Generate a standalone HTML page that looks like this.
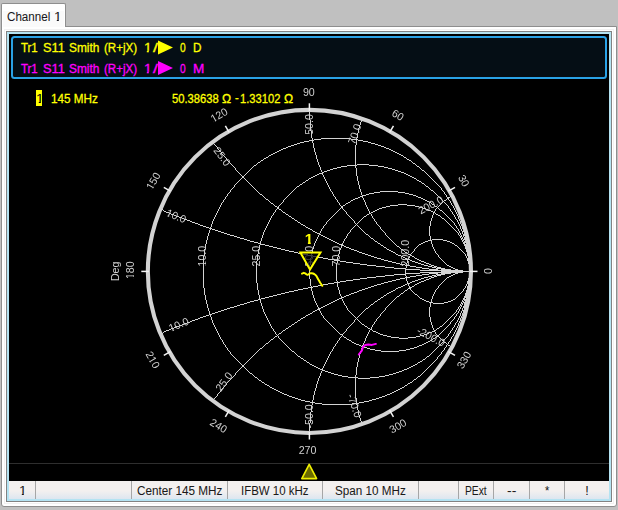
<!DOCTYPE html>
<html><head><meta charset="utf-8"><title>Channel 1</title>
<style>
html,body{margin:0;padding:0;background:#c0c0c0;}
body{width:618px;height:510px;background:#c0c0c0;position:relative;overflow:hidden;font-family:"Liberation Sans",sans-serif;}
div,span{position:absolute;box-sizing:border-box;}
.t{white-space:nowrap;line-height:1;transform-origin:0 0;}
#outer{left:1px;top:26px;width:616px;height:481px;background:#fff;border:1px solid #8e8e8e;border-radius:0 0 3px 3px;}
#tab{left:1px;top:3px;width:65px;height:24px;background:#fff;border:1px solid #8e8e8e;border-bottom:none;border-radius:2px 2px 0 0;}
#inner{left:6px;top:31px;width:606px;height:471px;background:#b4e3f2;border:1px solid #828282;}
#black{left:9px;top:34px;width:600px;height:447px;background:#000;}
#hdr{left:11px;top:36px;width:596px;height:43px;border:2px solid #2aa2e6;border-radius:3.5px;background:#050e15;}
#status{left:9px;top:481px;width:600px;height:18px;background:linear-gradient(#f3f0ef 0,#f3f0ef 55%,#dde6f0 100%);}
.sep{top:481px;width:1px;height:18px;background:#a6a6a6;}
.st{font-size:11.8px;color:#1a1a1a;top:485px;}
#hline{left:9px;top:463px;width:600px;height:1px;background:#2e2e2e;}
.y{color:#f2f200;} .m{color:#f000f0;}
.h{font-size:11.8px;}
svg{position:absolute;left:0;top:0;will-change:transform;}
svg text{font-family:"Liberation Sans",sans-serif;font-size:10.67px;fill:#d0d0d0;}
</style></head><body>
<div id="outer"></div>
<div id="tab"></div>
<div style="left:3px;top:11px;width:61px;height:16px;background:#fafafa;"></div>
<div style="left:4px;top:29px;width:610px;height:475px;border:1px solid #f1f1f1;"></div>
<div id="inner"></div>
<div id="black"></div>
<div id="hdr"></div>
<div style="left:36px;top:90px;width:6px;height:16px;background:#ffff00;"></div>
<div id="hline"></div>
<div id="status"></div><div class="sep" style="left:35px"></div><div class="sep" style="left:131px"></div><div class="sep" style="left:227px"></div><div class="sep" style="left:322px"></div><div class="sep" style="left:418px"></div><div class="sep" style="left:458px"></div><div class="sep" style="left:493px"></div><div class="sep" style="left:529px"></div><div class="sep" style="left:564px"></div>
<span class="t" style="left:7.00px;top:11.00px;font-size:12.5px;color:#181820;-webkit-text-stroke:0.05px #181820;transform:scaleX(0.9304);">Channel</span>
<span class="t" style="clip-path:polygon(0 0,8px 0,8px 8.8px,4.4px 8.8px,4.4px 13px,2.55px 13px,2.55px 8.8px,0 8.8px);left:54.00px;top:11.00px;font-size:12.5px;color:#181820;-webkit-text-stroke:0.05px #181820;transform:scaleX(1.1000);">1</span>
<span class="t" style="left:21.30px;top:42.00px;font-size:12.5px;color:#ffff00;-webkit-text-stroke:0.3px #ffff00;transform:scaleX(0.9119);">Tr1</span>
<span class="t" style="left:42.88px;top:42.00px;font-size:12.5px;color:#ffff00;-webkit-text-stroke:0.3px #ffff00;transform:scaleX(1.0223);">S11</span>
<span class="t" style="left:69.35px;top:42.00px;font-size:12.5px;color:#ffff00;-webkit-text-stroke:0.3px #ffff00;transform:scaleX(0.9516);">Smith</span>
<span class="t" style="left:104.07px;top:42.00px;font-size:12.5px;color:#ffff00;-webkit-text-stroke:0.3px #ffff00;transform:scaleX(0.9265);">(R+jX)</span>
<span class="t" style="clip-path:polygon(0 0,8px 0,8px 8.8px,4.4px 8.8px,4.4px 13px,2.55px 13px,2.55px 8.8px,0 8.8px);left:143.90px;top:42.00px;font-size:12.5px;color:#ffff00;-webkit-text-stroke:0.3px #ffff00;transform:scaleX(1.1000);">1</span>
<span class="t" style="left:152.90px;top:42.00px;font-size:12.5px;color:#ffff00;-webkit-text-stroke:0.3px #ffff00;transform:scaleX(1.4000);">/</span>
<span class="t" style="left:180.10px;top:42.00px;font-size:12.5px;color:#ffff00;-webkit-text-stroke:0.3px #ffff00;transform:scaleX(0.8143);">0</span>
<span class="t" style="left:193.36px;top:42.00px;font-size:12.5px;color:#ffff00;-webkit-text-stroke:0.3px #ffff00;transform:scaleX(0.9375);">D</span>
<span class="t" style="left:21.30px;top:63.00px;font-size:12.5px;color:#ff00ff;-webkit-text-stroke:0.3px #ff00ff;transform:scaleX(0.9119);">Tr1</span>
<span class="t" style="left:42.88px;top:63.00px;font-size:12.5px;color:#ff00ff;-webkit-text-stroke:0.3px #ff00ff;transform:scaleX(1.0223);">S11</span>
<span class="t" style="left:69.35px;top:63.00px;font-size:12.5px;color:#ff00ff;-webkit-text-stroke:0.3px #ff00ff;transform:scaleX(0.9516);">Smith</span>
<span class="t" style="left:104.07px;top:63.00px;font-size:12.5px;color:#ff00ff;-webkit-text-stroke:0.3px #ff00ff;transform:scaleX(0.9265);">(R+jX)</span>
<span class="t" style="clip-path:polygon(0 0,8px 0,8px 8.8px,4.4px 8.8px,4.4px 13px,2.55px 13px,2.55px 8.8px,0 8.8px);left:143.90px;top:63.00px;font-size:12.5px;color:#ff00ff;-webkit-text-stroke:0.3px #ff00ff;transform:scaleX(1.1000);">1</span>
<span class="t" style="left:152.90px;top:63.00px;font-size:12.5px;color:#ff00ff;-webkit-text-stroke:0.3px #ff00ff;transform:scaleX(1.4000);">/</span>
<span class="t" style="left:180.10px;top:63.00px;font-size:12.5px;color:#ff00ff;-webkit-text-stroke:0.3px #ff00ff;transform:scaleX(0.8143);">0</span>
<span class="t" style="left:193.21px;top:63.00px;font-size:12.5px;color:#ff00ff;-webkit-text-stroke:0.3px #ff00ff;transform:scaleX(1.0889);">M</span>
<span class="t" style="clip-path:polygon(0 0,8px 0,8px 8.8px,4.4px 8.8px,4.4px 13px,2.55px 13px,2.55px 8.8px,0 8.8px);left:35.95px;top:93.00px;font-size:12.5px;color:#000;-webkit-text-stroke:0.05px #000;transform:scaleX(1.1000);">1</span>
<span class="t" style="left:51.36px;top:93.00px;font-size:12.5px;color:#ffff00;-webkit-text-stroke:0.3px #ffff00;transform:scaleX(0.9388);">145 MHz</span>
<span class="t" style="left:171.80px;top:93.00px;font-size:12.5px;color:#ffff00;-webkit-text-stroke:0.3px #ffff00;transform:scaleX(0.8962);">50.38638</span>
<span class="t" style="left:221.80px;top:93.00px;font-size:12.5px;color:#ffff00;-webkit-text-stroke:0.3px #ffff00;transform:scaleX(0.9778);">Ω</span>
<span class="t" style="left:235.00px;top:92.20px;font-size:12.5px;color:#ffff00;-webkit-text-stroke:0.3px #ffff00;transform:scaleX(0.9000);">-</span>
<span class="t" style="left:239.71px;top:93.00px;font-size:12.5px;color:#ffff00;-webkit-text-stroke:0.3px #ffff00;transform:scaleX(0.8932);">1.33102</span>
<span class="t" style="left:283.70px;top:93.00px;font-size:12.5px;color:#ffff00;-webkit-text-stroke:0.3px #ffff00;transform:scaleX(0.9778);">Ω</span>
<span class="t" style="clip-path:polygon(0 0,8px 0,8px 8.8px,4.4px 8.8px,4.4px 13px,2.55px 13px,2.55px 8.8px,0 8.8px);left:18.90px;top:485.00px;font-size:12.5px;color:#1a1a1a;-webkit-text-stroke:0.05px #1a1a1a;transform:scaleX(1.1000);">1</span>
<span class="t" style="left:136.60px;top:485.00px;font-size:12.5px;color:#1a1a1a;-webkit-text-stroke:0.05px #1a1a1a;transform:scaleX(0.9385);">Center 145 MHz</span>
<span class="t" style="left:241.38px;top:485.00px;font-size:12.5px;color:#1a1a1a;-webkit-text-stroke:0.05px #1a1a1a;transform:scaleX(0.9167);">IFBW 10 kHz</span>
<span class="t" style="left:334.77px;top:485.00px;font-size:12.5px;color:#1a1a1a;-webkit-text-stroke:0.05px #1a1a1a;transform:scaleX(0.9347);">Span 10 MHz</span>
<span class="t" style="left:465.18px;top:485.00px;font-size:12.5px;color:#1a1a1a;-webkit-text-stroke:0.05px #1a1a1a;transform:scaleX(0.8231);">PExt</span>
<span class="t" style="left:507.30px;top:485.00px;font-size:12.5px;color:#1a1a1a;-webkit-text-stroke:0.05px #1a1a1a;transform:scaleX(1.1125);">--</span>
<span class="t" style="left:544.70px;top:485.00px;font-size:12.5px;color:#1a1a1a;-webkit-text-stroke:0.05px #1a1a1a;transform:scaleX(0.8800);">*</span>
<span class="t" style="left:585.20px;top:485.00px;font-size:12.5px;color:#1a1a1a;-webkit-text-stroke:0.05px #1a1a1a;transform:scaleX(1.0000);">!</span>
<svg width="618" height="510" viewBox="0 0 618 510">
<polygon points="158,40.5 158,54.5 173,47.5" fill="#ffff00"/>
<polygon points="158,61 158,75 173,68" fill="#ff00ff"/>
<g fill="none" stroke="#d3d3d3" stroke-width="1" shape-rendering="crispEdges">
<path transform="translate(0 .5)" d="M309 111h1M309 112h1M309 113h1M309 114h1M309 115h1M309 116h1M309 117h1M309 118h1M309 119h1M310 120h1M361 120h1M310 121h1M361 121h1M310 122h1M360 122h1M310 123h1M360 123h1M310 124h1M360 124h1M310 125h1M359 125h1M310 126h1M359 126h1M310 127h1M359 127h1M310 128h1M358 128h1M310 129h1M358 129h1M310 130h1M358 130h1M311 131h1M358 131h1M311 132h1M358 132h1M311 133h1M357 133h1M311 134h1M357 134h1M311 135h1M357 135h1M311 136h1M357 136h1M311 137h1M357 137h1M312 138h1M321 138h30M356 138h1M312 139h1M314 139h7M351 139h7M309 140h5M356 140h1M358 140h5M304 141h5M312 141h1M356 141h1M363 141h5M300 142h4M312 142h1M356 142h1M368 142h3M213 143h1M297 143h3M313 143h1M356 143h1M371 143h4M214 144h1M294 144h3M313 144h1M356 144h1M375 144h3M215 145h1M291 145h3M313 145h1M355 145h1M378 145h3M216 146h1M288 146h3M313 146h1M355 146h1M381 146h3M217 147h1M286 147h2M313 147h1M355 147h1M384 147h2M217 148h1M283 148h3M314 148h1M355 148h1M386 148h3M218 149h1M281 149h2M314 149h1M355 149h1M389 149h2M219 150h1M279 150h2M314 150h1M355 150h1M391 150h2M220 151h1M277 151h2M314 151h1M355 151h1M393 151h2M221 152h1M275 152h2M315 152h1M355 152h1M395 152h2M221 153h1M273 153h2M315 153h1M355 153h1M397 153h2M222 154h1M271 154h2M315 154h1M355 154h1M399 154h2M223 155h1M269 155h2M316 155h1M355 155h1M401 155h2M224 156h1M268 156h1M316 156h1M355 156h1M403 156h1M225 157h1M266 157h2M316 157h1M355 157h1M404 157h2M226 158h1M264 158h2M316 158h1M355 158h1M406 158h1M226 159h1M263 159h1M317 159h1M355 159h1M407 159h2M227 160h1M261 160h2M317 160h1M355 160h1M409 160h2M228 161h1M260 161h1M317 161h1M355 161h1M411 161h1M229 162h1M258 162h2M318 162h1M355 162h1M412 162h1M230 163h1M257 163h1M318 163h1M355 163h1M413 163h2M231 164h1M256 164h1M318 164h1M355 164h1M357 164h12M415 164h1M232 165h1M254 165h2M319 165h1M347 165h10M369 165h9M416 165h1M233 166h1M253 166h1M319 166h1M341 166h6M355 166h1M378 166h6M417 166h2M234 167h1M252 167h1M320 167h1M337 167h4M355 167h1M384 167h4M419 167h1M235 168h1M251 168h1M320 168h1M333 168h4M356 168h1M388 168h4M420 168h1M235 169h1M250 169h1M320 169h1M330 169h3M356 169h1M392 169h3M421 169h1M236 170h1M249 170h1M321 170h1M327 170h3M356 170h1M395 170h3M422 170h2M237 171h1M248 171h1M321 171h1M324 171h3M356 171h1M398 171h3M424 171h1M238 172h1M247 172h1M322 172h2M356 172h1M401 172h3M425 172h1M239 173h1M246 173h1M319 173h4M356 173h1M404 173h2M426 173h1M240 174h1M245 174h1M317 174h2M322 174h1M356 174h1M406 174h2M427 174h1M241 175h1M244 175h1M315 175h2M323 175h1M356 175h1M408 175h2M428 175h1M242 176h2M313 176h2M323 176h1M357 176h1M410 176h2M429 176h1M242 177h2M311 177h2M324 177h1M357 177h1M412 177h2M430 177h1M241 178h1M244 178h1M309 178h2M324 178h1M357 178h1M414 178h2M431 178h1M240 179h1M245 179h1M308 179h1M325 179h1M357 179h1M416 179h1M432 179h1M239 180h1M246 180h1M306 180h2M325 180h1M357 180h1M417 180h2M433 180h1M238 181h1M247 181h1M305 181h1M326 181h1M358 181h1M419 181h2M434 181h1M237 182h1M248 182h1M303 182h2M326 182h1M358 182h1M421 182h1M435 182h1M236 183h1M249 183h1M302 183h1M327 183h1M358 183h1M422 183h2M436 183h1M235 184h1M250 184h1M300 184h2M327 184h1M358 184h1M424 184h1M437 184h1M234 185h1M251 185h1M299 185h1M328 185h1M359 185h1M425 185h1M438 185h1M234 186h1M252 186h1M297 186h2M328 186h1M359 186h1M426 186h2M439 186h1M233 187h1M253 187h1M296 187h1M329 187h1M359 187h1M428 187h1M440 187h1M232 188h1M254 188h1M295 188h1M329 188h1M359 188h1M429 188h1M441 188h1M231 189h1M255 189h1M294 189h1M330 189h1M360 189h1M430 189h1M441 189h1M230 190h1M256 190h1M293 190h1M330 190h1M360 190h1M431 190h2M442 190h1M230 191h1M257 191h1M292 191h1M331 191h1M360 191h1M380 191h18M433 191h1M443 191h1M229 192h1M258 192h1M291 192h1M332 192h1M361 192h1M374 192h6M398 192h7M434 192h1M444 192h1M228 193h1M259 193h1M290 193h1M332 193h1M361 193h1M369 193h5M405 193h4M435 193h1M444 193h1M227 194h1M260 194h2M289 194h1M333 194h1M361 194h1M366 194h3M409 194h4M436 194h1M445 194h1M227 195h1M262 195h1M288 195h1M333 195h1M362 195h4M413 195h3M437 195h1M446 195h1M226 196h1M263 196h1M287 196h1M334 196h1M360 196h3M416 196h2M438 196h1M446 196h1M450 196h1M225 197h1M264 197h1M286 197h1M335 197h1M358 197h2M362 197h1M418 197h3M439 197h1M447 197h3M225 198h1M265 198h1M285 198h1M335 198h1M355 198h3M363 198h1M421 198h2M440 198h1M447 198h2M224 199h1M266 199h2M284 199h1M336 199h1M353 199h2M363 199h1M423 199h2M441 199h1M446 199h1M448 199h1M223 200h1M268 200h1M283 200h1M337 200h1M351 200h2M364 200h1M425 200h2M442 200h1M444 200h2M449 200h1M223 201h1M269 201h1M283 201h1M337 201h1M350 201h1M364 201h1M427 201h2M443 201h1M450 201h1M222 202h1M270 202h1M282 202h1M338 202h1M348 202h2M365 202h1M429 202h2M442 202h1M444 202h1M450 202h1M221 203h1M271 203h2M281 203h1M339 203h1M346 203h2M365 203h1M431 203h1M441 203h1M445 203h1M451 203h1M221 204h1M273 204h1M280 204h1M339 204h1M345 204h1M365 204h1M398 204h9M432 204h2M440 204h1M446 204h1M451 204h1M220 205h1M274 205h1M279 205h1M340 205h1M343 205h2M366 205h1M390 205h8M407 205h8M434 205h1M439 205h1M447 205h1M452 205h1M220 206h1M275 206h2M278 206h1M341 206h2M366 206h1M386 206h4M415 206h4M435 206h2M438 206h1M448 206h1M453 206h1M219 207h1M277 207h2M341 207h2M367 207h1M382 207h4M419 207h4M437 207h1M448 207h1M453 207h1M219 208h1M277 208h2M340 208h1M342 208h1M367 208h1M379 208h3M423 208h3M436 208h1M438 208h1M449 208h1M454 208h1M162 209h1M218 209h1M276 209h1M279 209h2M339 209h1M343 209h1M368 209h1M377 209h2M426 209h2M435 209h1M439 209h1M450 209h1M454 209h1M163 210h1M218 210h1M275 210h1M281 210h1M338 210h1M344 210h1M368 210h1M375 210h2M428 210h3M435 210h1M440 210h2M450 210h1M455 210h1M164 211h2M217 211h1M275 211h1M282 211h1M337 211h1M345 211h1M369 211h1M373 211h2M431 211h2M434 211h1M442 211h1M451 211h1M455 211h1M166 212h3M217 212h1M274 212h1M283 212h2M336 212h1M346 212h1M369 212h1M371 212h2M433 212h2M443 212h1M452 212h1M456 212h1M169 213h2M216 213h1M273 213h1M285 213h1M335 213h1M346 213h1M369 213h2M433 213h1M435 213h1M444 213h1M452 213h1M456 213h1M171 214h3M216 214h1M273 214h1M286 214h2M334 214h1M347 214h1M367 214h2M371 214h1M433 214h1M436 214h2M445 214h1M453 214h1M457 214h1M174 215h2M215 215h1M272 215h1M288 215h1M333 215h1M348 215h1M366 215h1M371 215h1M432 215h1M438 215h2M446 215h1M454 215h1M457 215h1M176 216h3M215 216h1M271 216h1M289 216h2M332 216h1M349 216h1M364 216h2M372 216h1M432 216h1M440 216h1M447 216h1M454 216h1M458 216h1M179 217h3M214 217h1M271 217h1M291 217h1M331 217h1M350 217h1M363 217h1M372 217h1M432 217h1M441 217h1M448 217h1M455 217h1M458 217h1M182 218h2M214 218h1M270 218h1M292 218h2M330 218h1M351 218h1M362 218h1M373 218h1M431 218h1M442 218h2M449 218h1M455 218h1M458 218h1M184 219h3M213 219h1M270 219h1M294 219h1M329 219h1M352 219h1M361 219h1M374 219h1M431 219h1M444 219h1M450 219h1M456 219h1M459 219h1M187 220h3M213 220h1M269 220h1M295 220h2M328 220h1M353 220h1M360 220h1M374 220h1M431 220h1M445 220h1M451 220h1M457 220h1M459 220h1M190 221h2M212 221h1M269 221h1M297 221h1M327 221h1M354 221h1M359 221h1M375 221h1M430 221h1M446 221h1M452 221h1M457 221h1M460 221h1M192 222h3M212 222h1M268 222h1M298 222h2M326 222h1M354 222h1M358 222h1M376 222h1M430 222h1M447 222h1M453 222h1M458 222h1M460 222h1M195 223h3M212 223h1M268 223h1M300 223h1M326 223h1M355 223h1M357 223h1M376 223h1M430 223h1M448 223h1M454 223h1M458 223h1M460 223h1M198 224h2M211 224h1M267 224h1M301 224h2M325 224h1M356 224h1M377 224h1M430 224h1M449 224h1M454 224h1M459 224h1M461 224h1M200 225h3M211 225h1M267 225h1M303 225h2M324 225h1M355 225h1M357 225h1M378 225h1M430 225h1M450 225h1M455 225h1M459 225h1M461 225h1M203 226h3M211 226h1M266 226h1M305 226h1M323 226h1M354 226h1M358 226h1M379 226h1M429 226h1M451 226h1M456 226h1M460 226h1M462 226h1M206 227h3M210 227h1M266 227h1M306 227h2M323 227h1M353 227h1M359 227h1M380 227h1M429 227h1M452 227h1M456 227h1M460 227h1M462 227h1M209 228h3M265 228h1M308 228h2M322 228h1M352 228h1M360 228h1M380 228h1M429 228h1M453 228h1M457 228h1M460 228h1M462 228h1M210 229h1M212 229h3M265 229h1M310 229h2M321 229h1M351 229h1M361 229h1M381 229h1M429 229h1M454 229h1M458 229h1M461 229h1M463 229h1M209 230h1M215 230h3M264 230h1M312 230h1M321 230h1M350 230h1M362 230h1M382 230h1M429 230h1M455 230h1M458 230h1M461 230h1M463 230h1M209 231h1M218 231h3M264 231h1M313 231h2M320 231h1M350 231h1M363 231h1M383 231h1M429 231h1M456 231h1M459 231h1M462 231h2M209 232h1M221 232h3M263 232h1M315 232h2M320 232h1M349 232h1M364 232h1M384 232h1M429 232h1M457 232h1M459 232h1M462 232h1M464 232h1M208 233h1M224 233h3M263 233h1M317 233h3M348 233h1M365 233h1M385 233h1M429 233h1M458 233h1M460 233h1M462 233h1M464 233h1M208 234h1M227 234h3M263 234h1M319 234h2M347 234h1M366 234h2M385 234h1M429 234h1M458 234h1M460 234h1M463 234h2M208 235h1M230 235h4M262 235h1M318 235h1M321 235h2M347 235h1M368 235h1M386 235h1M429 235h1M459 235h1M461 235h1M463 235h2M207 236h1M234 236h3M262 236h1M318 236h1M323 236h2M346 236h1M369 236h1M387 236h1M430 236h1M460 236h2M463 236h1M465 236h1M207 237h1M237 237h3M262 237h1M317 237h1M325 237h2M346 237h1M370 237h1M388 237h1M430 237h1M460 237h1M462 237h1M464 237h2M207 238h1M240 238h4M261 238h1M317 238h1M327 238h2M345 238h1M371 238h2M389 238h1M430 238h1M461 238h2M464 238h2M207 239h1M244 239h3M261 239h1M316 239h1M329 239h2M344 239h1M373 239h1M390 239h1M430 239h1M432 239h11M461 239h1M463 239h3M206 240h1M247 240h3M261 240h1M316 240h1M331 240h2M344 240h1M374 240h1M391 240h1M428 240h4M443 240h4M462 240h2M465 240h2M206 241h1M250 241h4M260 241h1M315 241h1M333 241h2M343 241h1M375 241h2M392 241h1M425 241h3M431 241h1M447 241h3M462 241h1M464 241h3M206 242h1M254 242h4M260 242h1M315 242h1M335 242h2M343 242h1M377 242h1M393 242h1M423 242h2M431 242h1M450 242h2M463 242h4M206 243h1M258 243h3M314 243h1M337 243h2M342 243h1M378 243h2M394 243h1M421 243h2M431 243h1M452 243h2M463 243h2M466 243h1M205 244h1M260 244h5M314 244h1M339 244h4M380 244h1M395 244h1M419 244h2M432 244h1M454 244h1M464 244h4M205 245h1M259 245h1M265 245h4M314 245h1M341 245h3M381 245h2M396 245h1M418 245h1M432 245h1M455 245h2M464 245h4M205 246h1M259 246h1M269 246h4M313 246h1M341 246h1M344 246h2M383 246h1M397 246h2M417 246h1M432 246h1M457 246h1M465 246h3M205 247h1M259 247h1M273 247h4M313 247h1M341 247h1M346 247h3M384 247h2M399 247h1M416 247h1M433 247h1M458 247h1M465 247h3M205 248h1M259 248h1M277 248h4M313 248h1M340 248h1M349 248h2M386 248h1M400 248h1M415 248h1M433 248h1M459 248h1M465 248h3M204 249h1M258 249h1M281 249h4M312 249h1M340 249h1M351 249h3M387 249h2M401 249h2M414 249h1M434 249h1M460 249h1M466 249h2M204 250h1M258 250h1M285 250h4M312 250h1M339 250h1M354 250h3M389 250h2M403 250h1M414 250h1M434 250h1M461 250h1M466 250h3M204 251h1M258 251h1M289 251h5M312 251h1M339 251h1M357 251h2M391 251h2M404 251h1M413 251h1M435 251h1M462 251h1M466 251h3M204 252h1M258 252h1M294 252h4M312 252h1M339 252h1M359 252h3M393 252h2M405 252h2M412 252h1M435 252h1M463 252h1M467 252h2M204 253h1M258 253h1M298 253h5M311 253h1M339 253h1M362 253h3M395 253h1M407 253h1M411 253h1M436 253h1M464 253h1M467 253h2M204 254h1M257 254h1M303 254h5M311 254h1M338 254h1M365 254h3M396 254h2M408 254h3M437 254h1M465 254h1M467 254h2M204 255h1M257 255h1M308 255h5M338 255h1M368 255h3M398 255h3M410 255h2M438 255h1M465 255h1M467 255h2M203 256h1M257 256h1M311 256h1M313 256h5M338 256h1M371 256h3M401 256h2M409 256h1M412 256h2M438 256h1M466 256h1M468 256h1M203 257h1M257 257h1M311 257h1M318 257h5M337 257h1M374 257h3M403 257h2M409 257h1M414 257h1M439 257h1M466 257h1M468 257h2M203 258h1M257 258h1M310 258h1M323 258h5M337 258h1M377 258h4M405 258h2M408 258h1M415 258h2M440 258h1M467 258h3M203 259h1M257 259h1M310 259h1M328 259h6M337 259h1M381 259h3M407 259h3M417 259h2M441 259h1M467 259h3M203 260h1M257 260h1M310 260h1M334 260h6M384 260h4M407 260h1M410 260h2M419 260h2M442 260h1M467 260h3M203 261h1M256 261h1M310 261h1M337 261h1M340 261h6M388 261h4M407 261h1M412 261h3M421 261h3M443 261h1M468 261h2M203 262h1M256 262h1M310 262h1M337 262h1M346 262h7M392 262h4M407 262h1M415 262h3M424 262h2M444 262h1M468 262h2M203 263h1M256 263h1M310 263h1M336 263h1M353 263h7M396 263h4M406 263h1M418 263h3M426 263h3M445 263h1M468 263h2M203 264h1M256 264h1M310 264h1M336 264h1M360 264h7M400 264h5M406 264h1M421 264h3M429 264h2M446 264h1M469 264h1M203 265h1M256 265h1M309 265h1M336 265h1M367 265h9M405 265h5M424 265h4M431 265h3M447 265h2M469 265h1M203 266h1M256 266h1M309 266h1M336 266h1M376 266h9M406 266h1M410 266h6M428 266h4M434 266h3M449 266h2M469 266h1M203 267h1M256 267h1M309 267h1M336 267h1M385 267h9M406 267h1M416 267h6M432 267h4M437 267h4M451 267h2M469 267h1M203 268h1M256 268h1M309 268h1M336 268h1M394 268h12M422 268h7M436 268h9M453 268h2M469 268h1M203 269h1M256 269h1M309 269h1M336 269h1M405 269h15M429 269h9M441 269h10M455 269h3M469 269h1M203 270h1M256 270h1M309 270h1M336 270h1M405 270h1M420 270h43M469 270h1M203 271h1M256 271h1M309 271h1M336 271h1M405 271h1M441 271h29M203 272h1M256 272h1M309 272h1M336 272h1M405 272h1M420 272h43M469 272h1M203 273h1M256 273h1M309 273h1M336 273h1M405 273h15M429 273h9M441 273h10M455 273h3M469 273h1M203 274h1M256 274h1M309 274h1M336 274h1M394 274h12M422 274h7M436 274h9M453 274h2M469 274h1M203 275h1M256 275h1M309 275h1M336 275h1M385 275h9M405 275h1M416 275h6M432 275h4M437 275h4M451 275h2M469 275h1M203 276h1M256 276h1M309 276h1M336 276h1M376 276h9M406 276h1M410 276h6M428 276h4M434 276h3M449 276h2M469 276h1M203 277h1M256 277h1M309 277h1M336 277h1M367 277h9M405 277h5M424 277h4M431 277h3M447 277h2M469 277h1M203 278h1M256 278h1M309 278h1M336 278h1M360 278h7M400 278h5M406 278h1M421 278h3M429 278h2M446 278h1M468 278h2M203 279h1M256 279h1M310 279h1M336 279h1M353 279h7M396 279h4M406 279h1M418 279h3M426 279h3M445 279h1M468 279h2M203 280h1M256 280h1M310 280h1M336 280h1M346 280h7M392 280h4M406 280h1M415 280h3M424 280h2M444 280h1M468 280h2M203 281h1M256 281h1M310 281h1M337 281h1M340 281h6M388 281h4M407 281h1M412 281h3M421 281h3M443 281h1M467 281h3M203 282h1M256 282h1M310 282h1M334 282h6M384 282h4M407 282h1M410 282h2M419 282h2M442 282h1M467 282h3M203 283h1M257 283h1M310 283h1M328 283h6M337 283h1M381 283h3M407 283h3M417 283h2M441 283h1M467 283h3M203 284h1M257 284h1M310 284h1M323 284h5M337 284h1M377 284h4M405 284h2M408 284h1M415 284h2M440 284h1M466 284h1M468 284h2M203 285h1M257 285h1M310 285h1M318 285h5M337 285h1M374 285h3M403 285h2M408 285h1M414 285h1M439 285h1M466 285h1M468 285h1M203 286h1M257 286h1M311 286h1M313 286h5M337 286h1M371 286h3M401 286h2M409 286h1M412 286h2M438 286h1M465 286h1M467 286h2M203 287h1M257 287h1M308 287h5M338 287h1M368 287h3M398 287h3M409 287h3M438 287h1M465 287h1M467 287h2M204 288h1M257 288h1M303 288h5M311 288h1M338 288h1M365 288h3M396 288h2M408 288h3M437 288h1M464 288h1M467 288h2M204 289h1M257 289h1M298 289h5M311 289h1M338 289h1M362 289h3M395 289h1M407 289h1M410 289h1M436 289h1M463 289h1M467 289h2M204 290h1M258 290h1M294 290h4M311 290h1M339 290h1M359 290h3M393 290h2M405 290h2M411 290h1M435 290h1M463 290h1M466 290h3M204 291h1M258 291h1M289 291h5M312 291h1M339 291h1M357 291h2M391 291h2M404 291h1M412 291h1M435 291h1M462 291h1M466 291h3M204 292h1M258 292h1M285 292h4M312 292h1M339 292h1M354 292h3M389 292h2M403 292h1M413 292h1M434 292h1M461 292h1M466 292h2M204 293h1M258 293h1M281 293h4M312 293h1M339 293h1M351 293h3M387 293h2M401 293h2M414 293h1M434 293h1M460 293h1M465 293h3M204 294h1M258 294h1M277 294h4M312 294h1M340 294h1M349 294h2M386 294h1M400 294h1M415 294h2M433 294h1M459 294h1M465 294h3M205 295h1M259 295h1M273 295h4M313 295h1M340 295h1M346 295h3M384 295h2M399 295h1M417 295h1M433 295h1M458 295h1M465 295h3M205 296h1M259 296h1M269 296h4M313 296h1M341 296h1M344 296h2M383 296h1M397 296h2M418 296h1M432 296h1M457 296h1M464 296h4M205 297h1M259 297h1M265 297h4M313 297h1M341 297h3M381 297h2M396 297h1M419 297h1M432 297h1M456 297h1M464 297h4M205 298h1M259 298h1M261 298h4M314 298h1M339 298h3M380 298h1M395 298h1M420 298h2M432 298h1M455 298h1M463 298h2M466 298h1M205 299h1M258 299h3M314 299h1M337 299h2M342 299h1M378 299h2M394 299h1M422 299h2M431 299h1M453 299h2M463 299h4M206 300h1M254 300h4M260 300h1M314 300h1M335 300h2M342 300h1M377 300h1M393 300h1M424 300h2M431 300h1M451 300h2M462 300h1M464 300h3M206 301h1M250 301h4M260 301h1M315 301h1M333 301h2M343 301h1M375 301h2M392 301h1M426 301h3M431 301h1M448 301h3M462 301h2M465 301h2M206 302h1M247 302h3M260 302h1M315 302h1M331 302h2M343 302h1M374 302h1M391 302h1M429 302h4M444 302h4M461 302h1M463 302h3M206 303h1M244 303h3M261 303h1M316 303h1M329 303h2M344 303h1M373 303h1M390 303h1M430 303h1M433 303h11M461 303h2M464 303h2M207 304h1M240 304h4M261 304h1M316 304h1M327 304h2M344 304h1M371 304h2M389 304h1M430 304h1M460 304h1M462 304h1M464 304h2M207 305h1M237 305h3M261 305h1M317 305h1M325 305h2M345 305h1M370 305h1M388 305h1M430 305h1M460 305h2M464 305h2M207 306h1M234 306h3M262 306h1M317 306h1M323 306h2M346 306h1M369 306h1M387 306h1M430 306h1M459 306h1M461 306h1M463 306h2M207 307h1M230 307h4M262 307h1M318 307h1M321 307h2M346 307h1M368 307h1M386 307h1M429 307h1M458 307h1M460 307h1M463 307h2M208 308h1M227 308h3M262 308h1M318 308h3M347 308h1M366 308h2M385 308h1M429 308h1M458 308h1M460 308h1M462 308h1M464 308h1M208 309h1M224 309h3M263 309h1M317 309h3M347 309h1M365 309h1M385 309h1M429 309h1M457 309h1M459 309h1M462 309h1M464 309h1M208 310h1M221 310h3M263 310h1M315 310h2M319 310h1M348 310h1M364 310h1M384 310h1M429 310h1M456 310h1M459 310h1M462 310h2M209 311h1M218 311h3M263 311h1M313 311h2M320 311h1M349 311h1M363 311h1M383 311h1M429 311h1M456 311h1M458 311h1M461 311h1M463 311h1M209 312h1M215 312h3M264 312h1M312 312h1M320 312h1M350 312h1M362 312h1M382 312h1M429 312h1M455 312h1M458 312h1M461 312h1M463 312h1M209 313h1M212 313h3M264 313h1M310 313h2M321 313h1M351 313h1M361 313h1M381 313h1M429 313h1M454 313h1M457 313h1M460 313h1M462 313h1M209 314h3M265 314h1M308 314h2M321 314h1M352 314h1M360 314h1M380 314h1M429 314h1M453 314h1M456 314h1M460 314h1M462 314h1M206 315h3M210 315h1M265 315h1M306 315h2M322 315h1M353 315h1M359 315h1M380 315h1M429 315h1M452 315h1M456 315h1M460 315h1M462 315h1M203 316h3M210 316h1M266 316h1M305 316h1M323 316h1M354 316h1M358 316h1M379 316h1M429 316h1M451 316h1M455 316h1M459 316h1M461 316h1M200 317h3M211 317h1M266 317h1M303 317h2M323 317h1M355 317h1M357 317h1M378 317h1M430 317h1M450 317h1M454 317h1M459 317h1M461 317h1M198 318h2M211 318h1M267 318h1M301 318h2M324 318h1M356 318h1M377 318h1M430 318h1M449 318h1M454 318h1M458 318h1M460 318h1M195 319h3M211 319h1M267 319h1M300 319h1M325 319h1M355 319h1M357 319h1M376 319h1M430 319h1M448 319h1M453 319h1M458 319h1M460 319h1M192 320h3M212 320h1M268 320h1M298 320h2M326 320h1M354 320h1M358 320h1M376 320h1M430 320h1M447 320h1M452 320h1M457 320h1M460 320h1M190 321h2M212 321h1M268 321h1M297 321h1M327 321h1M354 321h1M359 321h1M375 321h1M430 321h1M446 321h1M451 321h1M457 321h1M459 321h1M187 322h3M212 322h1M269 322h1M295 322h2M328 322h1M353 322h1M360 322h1M374 322h1M431 322h1M445 322h1M450 322h1M456 322h1M459 322h1M184 323h3M213 323h1M269 323h1M294 323h1M329 323h1M352 323h1M361 323h1M374 323h1M431 323h1M444 323h1M450 323h1M455 323h1M458 323h1M182 324h2M213 324h1M270 324h1M292 324h2M330 324h1M351 324h1M362 324h2M373 324h1M431 324h1M443 324h1M449 324h1M455 324h1M458 324h1M179 325h3M214 325h1M270 325h1M291 325h1M331 325h1M350 325h1M364 325h1M372 325h1M432 325h1M442 325h1M448 325h1M454 325h1M458 325h1M176 326h3M214 326h1M271 326h1M289 326h2M332 326h1M349 326h1M365 326h2M372 326h1M432 326h1M440 326h2M447 326h1M454 326h1M457 326h1M174 327h2M215 327h1M271 327h1M288 327h1M333 327h1M348 327h1M367 327h1M371 327h1M432 327h1M439 327h1M446 327h1M453 327h1M457 327h1M171 328h3M215 328h1M272 328h1M286 328h2M334 328h1M347 328h1M368 328h2M371 328h1M433 328h1M437 328h2M445 328h1M452 328h1M456 328h1M169 329h2M216 329h1M273 329h1M285 329h1M335 329h1M346 329h1M370 329h2M433 329h1M436 329h1M444 329h1M452 329h1M456 329h1M166 330h3M216 330h1M273 330h1M283 330h2M336 330h1M346 330h1M369 330h1M372 330h1M434 330h2M443 330h1M451 330h1M455 330h1M164 331h2M217 331h1M274 331h1M282 331h1M337 331h1M345 331h1M369 331h1M373 331h3M432 331h3M442 331h1M450 331h1M455 331h1M163 332h1M217 332h1M275 332h1M281 332h1M338 332h1M344 332h1M368 332h1M376 332h2M429 332h3M435 332h1M441 332h1M450 332h1M454 332h1M162 333h1M218 333h1M275 333h1M279 333h2M339 333h1M343 333h1M368 333h1M378 333h2M427 333h2M435 333h1M440 333h1M449 333h1M454 333h1M218 334h1M276 334h1M278 334h1M340 334h3M367 334h1M380 334h3M424 334h3M436 334h1M439 334h1M448 334h1M453 334h1M219 335h1M277 335h1M342 335h1M367 335h1M383 335h4M420 335h4M437 335h2M448 335h1M453 335h1M219 336h1M275 336h2M278 336h1M341 336h1M343 336h1M366 336h1M387 336h4M416 336h4M436 336h3M447 336h1M452 336h1M220 337h1M274 337h1M278 337h1M340 337h1M344 337h2M366 337h1M391 337h8M408 337h8M435 337h1M439 337h1M446 337h1M451 337h1M220 338h1M273 338h1M279 338h1M339 338h1M346 338h1M365 338h1M399 338h9M433 338h2M440 338h1M445 338h1M451 338h1M221 339h1M271 339h2M280 339h1M339 339h1M347 339h2M365 339h1M432 339h1M441 339h1M444 339h1M450 339h1M222 340h1M270 340h1M281 340h1M338 340h1M349 340h2M365 340h1M430 340h2M442 340h2M450 340h1M222 341h1M269 341h1M282 341h1M337 341h1M351 341h1M364 341h1M428 341h2M443 341h1M449 341h1M223 342h1M268 342h1M283 342h1M337 342h1M352 342h2M364 342h1M426 342h2M442 342h1M444 342h2M448 342h1M223 343h1M266 343h2M284 343h1M336 343h1M354 343h2M363 343h1M424 343h2M441 343h1M446 343h1M448 343h1M224 344h1M265 344h1M285 344h1M335 344h1M356 344h3M363 344h1M422 344h2M440 344h1M447 344h1M225 345h1M264 345h1M286 345h1M335 345h1M359 345h2M362 345h1M419 345h3M439 345h1M446 345h1M448 345h2M225 346h1M263 346h1M287 346h1M334 346h1M361 346h3M417 346h2M438 346h1M446 346h1M450 346h1M226 347h1M262 347h1M288 347h1M333 347h1M362 347h1M364 347h3M414 347h3M437 347h1M445 347h1M227 348h1M260 348h2M289 348h1M333 348h1M361 348h1M367 348h3M410 348h4M436 348h1M444 348h1M227 349h1M259 349h1M290 349h1M332 349h1M361 349h1M370 349h5M406 349h4M435 349h1M444 349h1M228 350h1M258 350h1M291 350h1M332 350h1M361 350h1M375 350h6M399 350h7M434 350h1M443 350h1M229 351h1M257 351h1M292 351h2M331 351h1M360 351h1M381 351h18M433 351h1M442 351h1M230 352h1M256 352h1M294 352h1M330 352h1M360 352h1M432 352h1M441 352h1M230 353h1M255 353h1M295 353h1M330 353h1M360 353h1M431 353h1M441 353h1M231 354h1M254 354h1M296 354h1M329 354h1M359 354h1M430 354h1M440 354h1M232 355h1M253 355h1M297 355h1M329 355h1M359 355h1M429 355h1M439 355h1M233 356h1M252 356h1M298 356h2M328 356h1M359 356h1M427 356h2M438 356h1M234 357h1M251 357h1M300 357h1M328 357h1M359 357h1M426 357h1M437 357h1M235 358h1M250 358h1M301 358h2M327 358h1M358 358h1M425 358h1M437 358h1M236 359h1M249 359h1M303 359h1M327 359h1M358 359h1M423 359h2M436 359h1M237 360h1M248 360h1M304 360h2M326 360h1M358 360h1M422 360h1M435 360h1M238 361h1M247 361h1M306 361h1M326 361h1M358 361h1M420 361h2M434 361h1M239 362h1M246 362h1M307 362h2M325 362h1M357 362h1M418 362h2M433 362h1M240 363h1M245 363h1M309 363h1M325 363h1M357 363h1M417 363h1M432 363h1M241 364h1M244 364h1M310 364h2M324 364h1M357 364h1M415 364h2M431 364h1M242 365h2M312 365h2M324 365h1M357 365h1M413 365h2M430 365h1M242 366h2M314 366h2M323 366h1M357 366h1M411 366h2M429 366h1M241 367h1M244 367h1M316 367h2M323 367h1M356 367h1M409 367h2M428 367h1M240 368h1M245 368h1M318 368h2M322 368h1M356 368h1M407 368h2M427 368h1M239 369h1M246 369h1M320 369h3M356 369h1M404 369h3M426 369h1M238 370h1M247 370h1M322 370h3M356 370h1M402 370h2M425 370h1M237 371h1M248 371h1M321 371h1M325 371h3M356 371h1M399 371h3M424 371h1M236 372h1M249 372h1M321 372h1M328 372h3M356 372h1M396 372h3M423 372h1M235 373h1M250 373h2M320 373h1M331 373h3M356 373h1M393 373h3M422 373h1M235 374h1M252 374h1M320 374h1M334 374h4M356 374h1M389 374h4M421 374h1M234 375h1M253 375h1M320 375h1M338 375h4M355 375h1M385 375h4M420 375h1M233 376h1M254 376h1M319 376h1M342 376h6M355 376h1M379 376h6M418 376h2M232 377h1M255 377h2M319 377h1M348 377h10M370 377h9M417 377h1M231 378h1M257 378h1M318 378h1M355 378h1M358 378h12M416 378h1M230 379h1M258 379h1M318 379h1M355 379h1M414 379h2M229 380h1M259 380h2M318 380h1M355 380h1M413 380h1M228 381h1M261 381h1M317 381h1M355 381h1M412 381h1M227 382h1M262 382h2M317 382h1M355 382h1M410 382h2M226 383h1M264 383h1M317 383h1M355 383h1M408 383h2M226 384h1M265 384h2M316 384h1M355 384h1M407 384h1M225 385h1M267 385h2M316 385h1M355 385h1M405 385h2M224 386h1M269 386h1M316 386h1M355 386h1M404 386h1M223 387h1M270 387h2M316 387h1M355 387h1M402 387h2M222 388h1M272 388h2M315 388h1M355 388h1M400 388h2M221 389h1M274 389h2M315 389h1M355 389h1M398 389h2M221 390h1M276 390h2M315 390h1M355 390h1M396 390h2M220 391h1M278 391h2M314 391h1M355 391h1M394 391h2M219 392h1M280 392h2M314 392h1M355 392h1M392 392h2M218 393h1M282 393h2M314 393h1M355 393h1M390 393h2M217 394h1M284 394h3M314 394h1M355 394h1M387 394h3M217 395h1M287 395h2M313 395h1M355 395h1M385 395h2M216 396h1M289 396h3M313 396h1M355 396h1M382 396h3M215 397h1M292 397h3M313 397h1M355 397h1M379 397h3M214 398h1M295 398h3M313 398h1M356 398h1M376 398h3M213 399h1M298 399h3M313 399h1M356 399h1M372 399h4M301 400h4M312 400h1M356 400h1M369 400h3M305 401h5M312 401h1M356 401h1M364 401h5M310 402h5M356 402h1M359 402h5M312 403h1M315 403h7M352 403h7M312 404h1M322 404h30M356 404h1M311 405h1M357 405h1M311 406h1M357 406h1M311 407h1M357 407h1M311 408h1M357 408h1M311 409h1M357 409h1M311 410h1M358 410h1M311 411h1M358 411h1M310 412h1M358 412h1M310 413h1M358 413h1M310 414h1M358 414h1M310 415h1M359 415h1M310 416h1M359 416h1M310 417h1M359 417h1M310 418h1M360 418h1M310 419h1M360 419h1M310 420h1M360 420h1M310 421h1M361 421h1M310 422h1M361 422h1M309 423h1M309 424h1M309 425h1M309 426h1M309 427h1M309 428h1M309 429h1M309 430h1M309 431h1"/>
</g>
<circle cx="309.4" cy="271.4" r="161.55" fill="none" stroke="#d3d3d3" stroke-width="4.1"/>
<g stroke="#f4f4f4" stroke-width="1.5">
<line x1="469.90" y1="271.40" x2="477.50" y2="271.40"/>
<line x1="448.40" y1="191.15" x2="454.98" y2="187.35"/>
<line x1="389.65" y1="132.40" x2="393.45" y2="125.82"/>
<line x1="309.40" y1="110.90" x2="309.40" y2="103.30"/>
<line x1="229.15" y1="132.40" x2="225.35" y2="125.82"/>
<line x1="170.40" y1="191.15" x2="163.82" y2="187.35"/>
<line x1="148.90" y1="271.40" x2="141.30" y2="271.40"/>
<line x1="170.40" y1="351.65" x2="163.82" y2="355.45"/>
<line x1="229.15" y1="410.40" x2="225.35" y2="416.98"/>
<line x1="309.40" y1="431.90" x2="309.40" y2="439.50"/>
<line x1="389.65" y1="410.40" x2="393.45" y2="416.98"/>
<line x1="448.40" y1="351.65" x2="454.98" y2="355.45"/>
</g>
<text transform="translate(488.20 270.95) rotate(-90.00)" text-anchor="middle" dy="3.80">0</text>
<text transform="translate(463.92 180.70) rotate(60.00)" text-anchor="middle" dy="3.80">30</text>
<text transform="translate(398.00 114.88) rotate(30.00)" text-anchor="middle" dy="3.80">60</text>
<text transform="translate(308.80 92.40) rotate(0.00)" text-anchor="middle" dy="3.80">90</text>
<text transform="translate(219.00 115.03) rotate(-30.00)" text-anchor="middle" dy="3.80" clip-path="url(#k1)">120</text>
<text transform="translate(153.18 181.00) rotate(-60.00)" text-anchor="middle" dy="3.80" clip-path="url(#k2)">150</text>
<text transform="translate(130.20 270.20) rotate(-90.00)" text-anchor="middle" dy="3.80" clip-path="url(#k3)">180</text>
<text transform="translate(152.88 359.70) rotate(60.00)" text-anchor="middle" dy="3.80" clip-path="url(#k4)">210</text>
<text transform="translate(218.70 425.72) rotate(30.00)" text-anchor="middle" dy="3.80">240</text>
<text transform="translate(307.55 450.40) rotate(0.00)" text-anchor="middle" dy="3.80">270</text>
<text transform="translate(397.90 425.97) rotate(-30.00)" text-anchor="middle" dy="3.80">300</text>
<text transform="translate(463.87 360.00) rotate(-60.00)" text-anchor="middle" dy="3.80">330</text>
<text transform="translate(115 271.3) rotate(-90)" text-anchor="middle" dy="3.8">Deg</text>
<text transform="translate(166.65 211.88) rotate(22.62)" text-anchor="start" dy="3.80" clip-path="url(#k5)">10.0</text>
<text transform="translate(169.61 329.88) rotate(-22.62)" text-anchor="start" dy="2.20" clip-path="url(#k6)">10.0</text>
<text transform="translate(216.73 147.50) rotate(53.13)" text-anchor="start" dy="4.80">25.0</text>
<text transform="translate(219.73 391.50) rotate(-53.13)" text-anchor="start" dy="1.20">25.0</text>
<text transform="translate(309.73 114.10) rotate(-90.00)" text-anchor="end" dy="2.80">50.0</text>
<text transform="translate(309.73 428.50) rotate(-90.00)" text-anchor="start" dy="3.00">-50.0</text>
<text transform="translate(360.00 124.88) rotate(-71.08)" text-anchor="end" dy="1.60">70.0</text>
<text transform="translate(359.51 416.70) rotate(71.08)" text-anchor="end" dy="4.80">-70.0</text>
<text transform="translate(443.23 200.30) rotate(-28.07)" text-anchor="end" dy="2.00">200.0</text>
<text transform="translate(444.55 343.41) rotate(28.07)" text-anchor="end" dy="4.20">-200.0</text>
<text transform="translate(203.06 266.50) rotate(-90.00)" text-anchor="start" dy="3.40" clip-path="url(#k7)">10.0</text>
<text transform="translate(256.40 266.50) rotate(-90.00)" text-anchor="start" dy="3.40">25.0</text>
<text transform="translate(309.73 266.50) rotate(-90.00)" text-anchor="start" dy="3.40">50.0</text>
<text transform="translate(336.40 266.50) rotate(-90.00)" text-anchor="start" dy="3.40">70.0</text>
<text transform="translate(405.73 266.50) rotate(-90.00)" text-anchor="start" dy="3.40">200.0</text>
<polyline points="358.8,354.5 361.8,350.6 363,347 365.3,345 368.5,344.6 371.8,344.9 375.9,343.9" fill="none" stroke="#ff00ff" stroke-width="2" stroke-linecap="round" stroke-linejoin="round"/>
<polyline points="302,273.6 303.8,272.8 305.2,273.4 306.4,274.3 307.6,274.8 308.6,274.4 309.5,273.6 310.6,273.3 311.7,273.3 313,273.5 314.2,274 315.2,274.7 316.1,275.6 317,277.1 318,278.9 319.1,280.8 320.2,282.7 321.3,284.3 322.4,285.8" fill="none" stroke="#ffff00" stroke-width="2" stroke-linecap="round" stroke-linejoin="round"/>
<polygon points="300.3,252.4 320.5,252.4 310,269.6" fill="rgba(0,0,0,0.72)" stroke="#ffff00" stroke-width="2" stroke-linejoin="miter"/>
<clipPath id="k1"><path clip-rule="evenodd" d="M-11.90 -8.20H11.90V7.80H-11.90ZM-8.47 2.75H-6.52V4.80H-8.47ZM-4.97 2.75H-3.14V4.80H-4.97Z"/></clipPath><clipPath id="k2"><path clip-rule="evenodd" d="M-11.90 -8.20H11.90V7.80H-11.90ZM-8.47 2.75H-6.52V4.80H-8.47ZM-4.97 2.75H-3.14V4.80H-4.97Z"/></clipPath><clipPath id="k3"><path clip-rule="evenodd" d="M-11.90 -8.20H11.90V7.80H-11.90ZM-8.47 2.75H-6.52V4.80H-8.47ZM-4.97 2.75H-3.14V4.80H-4.97Z"/></clipPath><clipPath id="k4"><path clip-rule="evenodd" d="M-11.90 -8.20H11.90V7.80H-11.90ZM-2.54 2.75H-0.59V4.80H-2.54ZM0.96 2.75H2.80V4.80H0.96Z"/></clipPath><clipPath id="k5"><path clip-rule="evenodd" d="M-3.00 -8.20H23.76V7.80H-3.00ZM0.43 2.75H2.38V4.80H0.43ZM3.93 2.75H5.76V4.80H3.93Z"/></clipPath><clipPath id="k6"><path clip-rule="evenodd" d="M-3.00 -9.80H23.76V6.20H-3.00ZM0.43 1.15H2.38V3.20H0.43ZM3.93 1.15H5.76V3.20H3.93Z"/></clipPath><clipPath id="k7"><path clip-rule="evenodd" d="M-3.00 -8.60H23.76V7.40H-3.00ZM0.43 2.35H2.38V4.40H0.43ZM3.93 2.35H5.76V4.40H3.93Z"/></clipPath>
<clipPath id="c1"><path d="M300 225H320V242.1H310.8V245H307.9V242.1H300Z"/></clipPath>
<text x="304.8" y="243.8" clip-path="url(#c1)" style="font-size:15px;font-weight:bold;fill:#ffff00;">1</text>
<polygon points="309.2,464.3 301.8,478.6 316.6,478.6" fill="#6b6b00" stroke="#f0f000" stroke-width="1.6" stroke-linejoin="round"/>
</svg>
</body></html>
